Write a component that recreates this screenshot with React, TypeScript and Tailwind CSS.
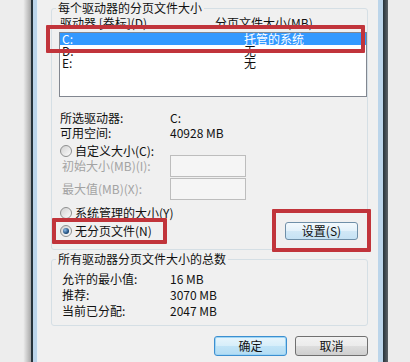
import React from 'react';

const Radio = ({ checked = false }: { checked?: boolean }) => (
  <span className="flex h-[12px] w-[12px] shrink-0 items-center justify-center rounded-full border border-[#8e8f8f] bg-[linear-gradient(135deg,#d2d2d2,#fbfbfb)]">
    {checked && (
      <span className="h-[6px] w-[6px] rounded-full bg-[radial-gradient(circle_at_35%_35%,#8cbbe8,#12406f_70%)]" />
    )}
  </span>
);

const GroupBox = ({ title, className = '', children }: { title: string; className?: string; children: React.ReactNode }) => (
  <fieldset className={`rounded-[3px] border border-[#d5dfe5] ${className}`}>
    <legend className="ml-[4px] px-[2px] leading-[12px]">{title}</legend>
    {children}
  </fieldset>
);

const drives = [
  { name: 'C:', size: '托管的系统', selected: true },
  { name: 'D:', size: '无' },
  { name: 'E:', size: '无' },
];

export default function App() {
  return (
    <div className="relative flex h-[362px] w-[410px] overflow-hidden bg-[#ececec] font-['Noto_Sans_CJK_SC','Liberation_Sans',sans-serif] text-[12px] text-[#111]">
      {/* window frame, left */}
      <div className="w-[31px] bg-[linear-gradient(to_right,#ededed_75%,#a8a8a8)]" />
      <div className="w-[2px] bg-[#26333b]" />
      <div className="w-[4px] bg-[#bcd5ea]" />
      <div className="w-[1px] bg-[#e9f1f7]" />

      {/* dialog */}
      <div className="flex w-[340px] flex-col bg-[#f0f0f0] pl-[13px] pr-[10px] pt-[2px]">
        <GroupBox title="每个驱动器的分页文件大小">
          <div className="pl-[7px] pb-[9px]">
            <div className="mt-[3px] ml-[1px] flex leading-[12px]">
              <span className="w-[155px]">驱动器 [卷标](D)</span>
              <span>分页文件大小(MB)</span>
            </div>

            <div className="mt-[3px] h-[65px] border border-[#828790] bg-white">
              {drives.map((d) => (
                <div
                  key={d.name}
                  className={`flex h-[12px] pl-[2px] leading-[12px] ${d.selected ? 'bg-[#3399ff] text-white' : ''}`}
                >
                  <span className="w-[182px]">{d.name}</span>
                  <span>{d.size}</span>
                </div>
              ))}
            </div>

            <div className="mt-[13px] ml-[1px] leading-[15px]">
              <div className="flex">
                <span className="w-[110px]">所选驱动器:</span>
                <span>C:</span>
              </div>
              <div className="flex">
                <span className="w-[110px]">可用空间:</span>
                <span>40928 MB</span>
              </div>
            </div>

            <div className="mt-[5px] ml-[1px] flex items-center gap-[3px] leading-[12px]">
              <Radio />
              <span>自定义大小(C):</span>
            </div>

            <div className="-mt-[2px] ml-[3px] flex h-[22px] items-center text-[#a3a3a3]">
              <span className="w-[108px]">初始大小(MB)(I):</span>
              <div className="h-[22px] w-[76px] border border-[#bdbdbd] bg-[#f5f5f5]" />
            </div>
            <div className="mt-[1px] ml-[3px] flex h-[22px] items-center text-[#a3a3a3]">
              <span className="w-[108px]">最大值(MB)(X):</span>
              <div className="h-[22px] w-[76px] border border-[#bdbdbd] bg-[#f5f5f5]" />
            </div>

            <div className="mt-[7px] ml-[1px] flex items-center gap-[3px] leading-[12px]">
              <Radio />
              <span>系统管理的大小(Y)</span>
            </div>

            <div className="mt-[3px] ml-[1px] flex h-[18px] items-center justify-between">
              <div className="flex items-center gap-[3px] leading-[12px]">
                <Radio checked />
                <span>无分页文件(N)</span>
              </div>
              <button className="mr-[9px] h-[18px] w-[73px] rounded-[3px] border border-[#6f8fa8] bg-[linear-gradient(#f3f9fd,#e3f1fa_50%,#d2e8f6_50%,#c6e2f4)] leading-[16px]">
                设置(S)
              </button>
            </div>
          </div>
        </GroupBox>

        <GroupBox title="所有驱动器分页文件大小的总数" className="mt-[3px]">
          <div className="mt-[6px] pb-[6px] pl-[10px] leading-[16px]">
            <div className="flex">
              <span className="w-[108px]">允许的最小值:</span>
              <span>16 MB</span>
            </div>
            <div className="flex">
              <span className="w-[108px]">推荐:</span>
              <span>3070 MB</span>
            </div>
            <div className="flex">
              <span className="w-[108px]">当前已分配:</span>
              <span>2047 MB</span>
            </div>
          </div>
        </GroupBox>

        <div className="mt-[10px] flex justify-end gap-[8px]">
          <button className="h-[20px] w-[73px] rounded-[3px] border border-[#3c8fd0] bg-[linear-gradient(#e8f5fc,#d6eefa_50%,#c1e4f7_50%,#b3dcf3)] leading-[18px] shadow-[inset_0_0_0_1px_#9fd5f4]">
            确定
          </button>
          <button className="h-[20px] w-[73px] rounded-[3px] border border-[#707070] bg-[linear-gradient(#f2f2f2,#ebebeb_50%,#dddddd_50%,#cfcfcf)] leading-[18px]">
            取消
          </button>
        </div>
      </div>

      {/* window frame, right */}
      <div className="w-[5px] bg-[#bcd5ea]" />
      <div className="w-[5px] bg-[linear-gradient(to_right,#26333b,#5d6266)]" />
      <div className="flex-1 bg-[#ececec]" />

      {/* red annotation boxes */}
      <div className="absolute left-[46px] top-[25px] h-[28px] w-[319px] rounded-[1px] border-[4px] border-[#c1343b]" />
      <div className="absolute left-[52px] top-[218px] h-[26px] w-[115px] rounded-[1px] border-[4px] border-[#c1343b]" />
      <div className="absolute left-[272px] top-[209px] h-[43px] w-[99px] rounded-[1px] border-[4px] border-[#c1343b]" />
    </div>
  );
}
